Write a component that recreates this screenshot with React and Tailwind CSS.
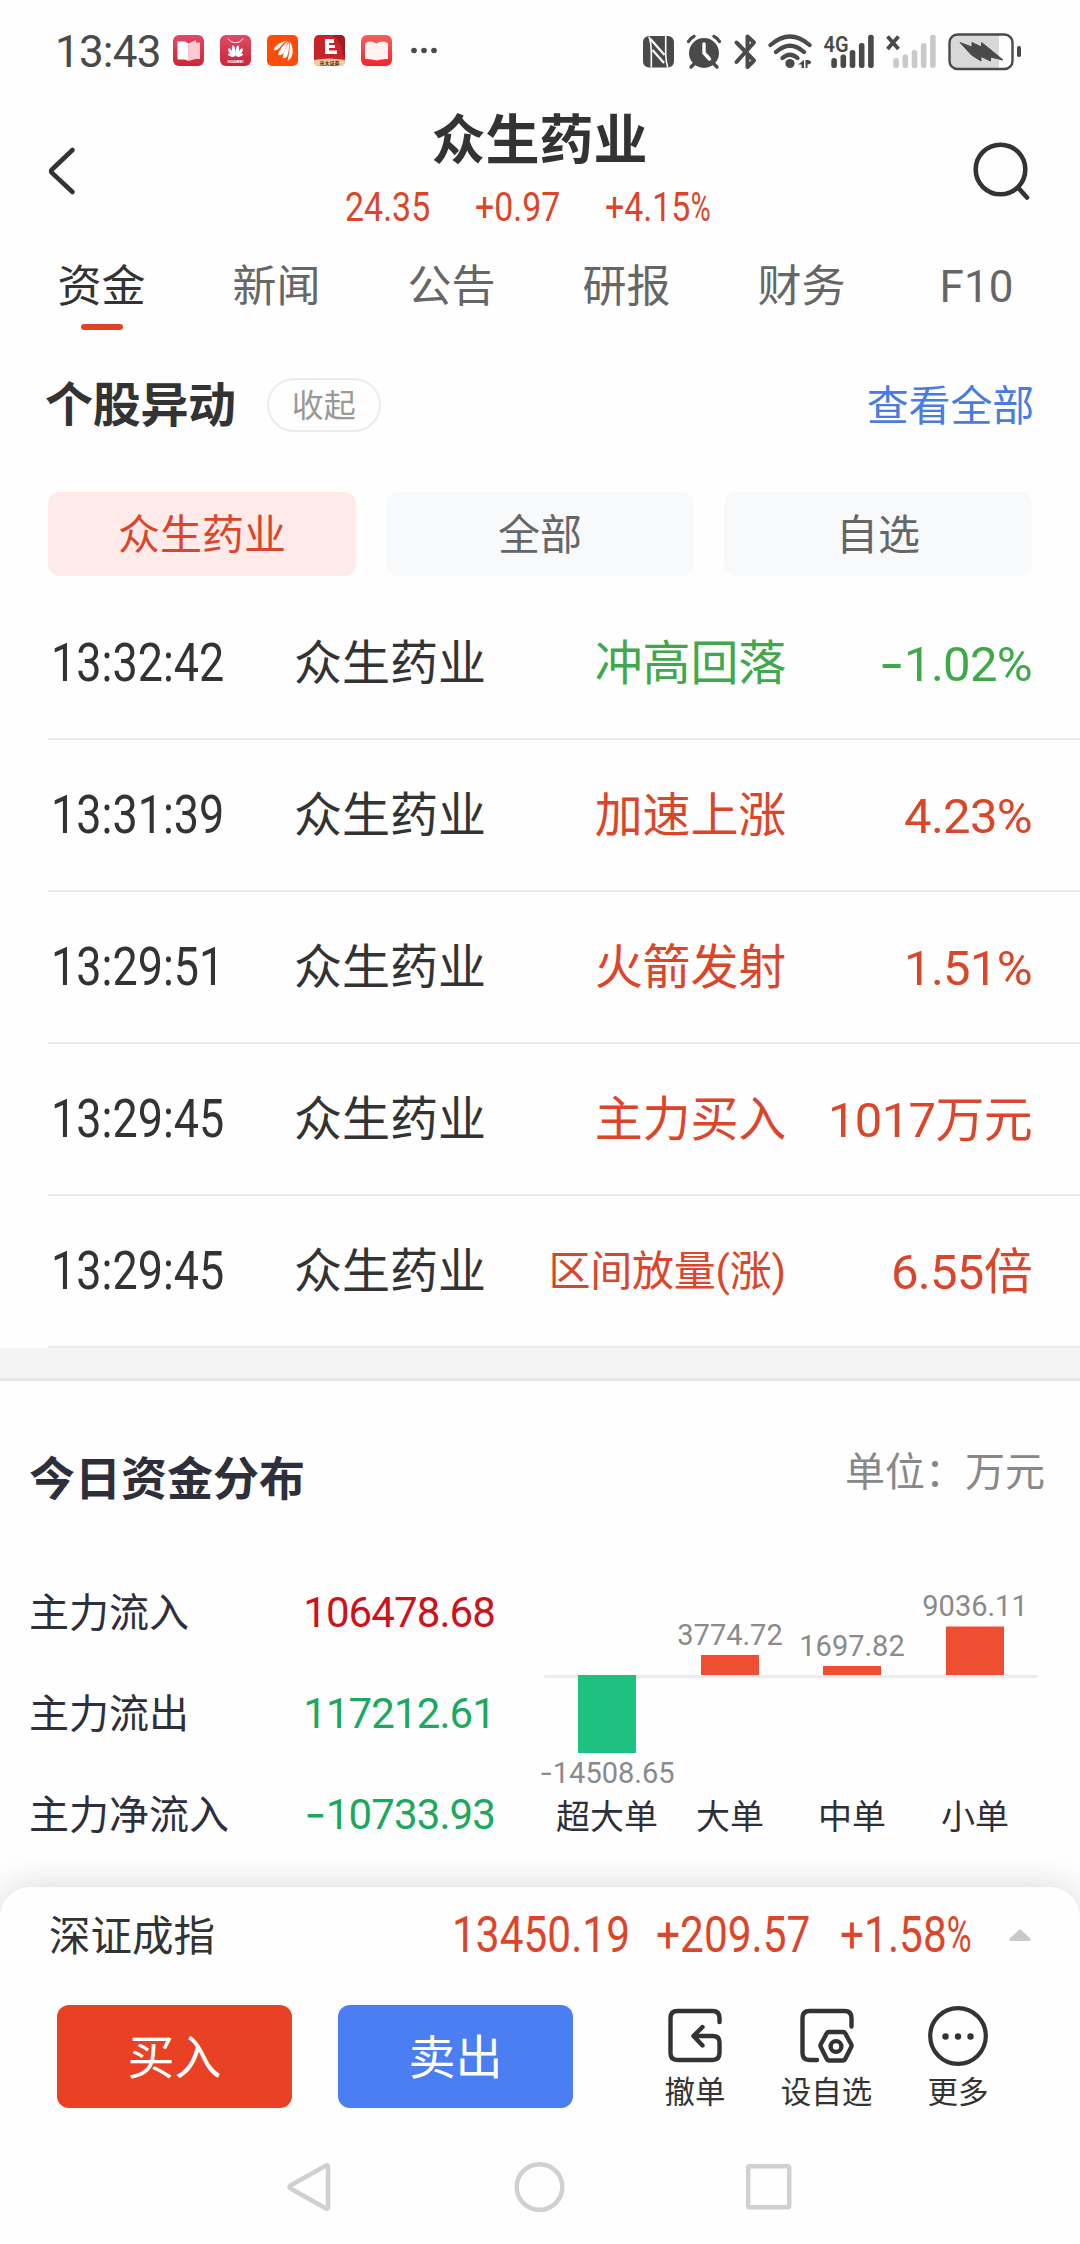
import React from "react";

const tabs = ["资金", "新闻", "公告", "研报", "财务", "F10"];

const moves = [
  { time: "13:32:42", type: "冲高回落", value: "-1.02%", color: "text-[#3fa84a]", size: "text-[48px]" },
  { time: "13:31:39", type: "加速上涨", value: "4.23%", color: "text-[#db462b]", size: "text-[48px]" },
  { time: "13:29:51", type: "火箭发射", value: "1.51%", color: "text-[#db462b]", size: "text-[48px]" },
  { time: "13:29:45", type: "主力买入", value: "1017万元", color: "text-[#db462b]", size: "text-[48px]" },
  { time: "13:29:45", type: "区间放量(涨)", value: "6.55倍", color: "text-[#db462b]", size: "text-[42px]" },
];

const flows = [
  { label: "主力流入", value: "106478.68", color: "text-[#cc121b]" },
  { label: "主力流出", value: "117212.61", color: "text-[#1ca95f]" },
  { label: "主力净流入", value: "-10733.93", color: "text-[#1ca95f]" },
];

// x and y are measured inside the 530x303 chart
const bars = [
  { label: "超大单", value: "-14508.65", x: 48, y: 113, h: 78, fill: "#1ec17f", textY: 221 },
  { label: "大单", value: "3774.72", x: 171, y: 93, h: 20, fill: "#f04e33", textY: 83 },
  { label: "中单", value: "1697.82", x: 293, y: 104, h: 9, fill: "#f04e33", textY: 94 },
  { label: "小单", value: "9036.11", x: 416, y: 64.5, h: 48.5, fill: "#f04e33", textY: 54 },
];

// Narrow figures used for quotes and times
const Din = ({ children, percent = false }) => (
  <span className="inline-block origin-left scale-x-[0.848] whitespace-nowrap [font-weight:450]">
    {children}
    {percent && <span className="inline-block origin-left scale-x-[0.8]">%</span>}
  </span>
);

// Inter has the wider minus
const Amount = ({ value }) =>
  value.startsWith("-") ? (
    <>
      <span className="inline-block origin-right scale-x-[1.15] font-[Inter]">-</span>
      {value.slice(1)}
    </>
  ) : (
    value
  );

const AppIcons = () => (
  <svg width="266" height="31" viewBox="0 0 266 31" className="ml-[14px]">
    <defs>
      <linearGradient id="rose" x1="0" y1="0" x2="0" y2="1">
        <stop offset="0" stopColor="#df4a68" />
        <stop offset="1" stopColor="#cb2636" />
      </linearGradient>
      <linearGradient id="coral" x1="0" y1="0" x2="0" y2="1">
        <stop offset="0" stopColor="#f4605c" />
        <stop offset="1" stopColor="#fb2229" />
      </linearGradient>
    </defs>
    {/* Reader */}
    <rect width="31" height="31" rx="6" fill="url(#rose)" />
    <path d="M15.500 8.500 23 5v2.500h4V24h-4.500l-7 2z" fill="#ffc9d0" />
    <path d="M4.500 6.500H12l3.500 2V26L12 24.500H4.500z" fill="#fff" />
    {/* Store */}
    <g transform="translate(47)">
      <rect width="31" height="31" rx="6" fill="url(#rose)" />
      <path d="M8 3.500c3 5.500 12 5.500 15 0" fill="none" stroke="#fff" strokeWidth="1" />
      <g fill="#fff">
        <ellipse cx="13.700" cy="16" rx="1.700" ry="5.500" transform="rotate(-8 13.700 16)" />
        <ellipse cx="17.300" cy="16" rx="1.700" ry="5.500" transform="rotate(8 17.300 16)" />
        <ellipse cx="11" cy="17.500" rx="1.500" ry="4.800" transform="rotate(-32 11 17.500)" />
        <ellipse cx="20" cy="17.500" rx="1.500" ry="4.800" transform="rotate(32 20 17.500)" />
        <ellipse cx="10.600" cy="20.300" rx="1.100" ry="3.200" transform="rotate(-65 10.600 20.300)" />
        <ellipse cx="20.400" cy="20.300" rx="1.100" ry="3.200" transform="rotate(65 20.400 20.300)" />
      </g>
      <text x="15.500" y="28" textAnchor="middle" fontSize="4.300" fontWeight="700" fill="#fff">HUAWEI</text>
    </g>
    {/* Swoosh */}
    <g transform="translate(94)">
      <rect width="31" height="31" rx="5" fill="#ff4b08" />
      <g fill="#fff">
        <path d="M6.500 15Q9 8 20.500 5.500q-3 1.500-6 5-2.500 3.500-5 4.500-1.500.500-3 0z" />
        <path d="M11 19.500Q13.500 11.500 21.500 6q-2 4-3.500 8.500-1.500 4.500-4 5.500-2 .500-3-.500z" />
        <path d="M15.500 22.500Q17 14.500 22.500 6.500q-.500 5-.800 9-.700 6-3.200 7.500-2 .500-3-.500z" />
        <path d="M20.500 26q2.500-9 2.500-19.500 3.200 6 2.500 12-.800 5-5 7.500z" />
      </g>
    </g>
    {/* Broker */}
    <g transform="translate(141)">
      <rect width="31" height="31" rx="5" fill="#c8232a" />
      <path d="M19 0q9 8 11 22l1 1V5q0-5-5-5z" fill="#9f1a1d" />
      <path d="M0 25q15.500-3 31 0v1q0 5-5 5H5q-5 0-5-5z" fill="#f2cf9d" />
      <path d="M11 4h9v4h-5v2h6v3h-6v2.500h8V19H11z" fill="#fff" />
      <text x="15.500" y="29.500" textAnchor="middle" fontSize="5" fontWeight="700" fill="#3b1a10">光大证券</text>
    </g>
    {/* Books */}
    <g transform="translate(188)">
      <rect width="31" height="31" rx="6" fill="url(#coral)" />
      <path d="M6 7q5-1.500 9.500 1.500Q20 5.500 25 7q.500 1 2 1.500V24q-6-.500-11.500 1.500Q10 23.500 4 24V8.500Q5.500 8 6 7z" fill="#fff2f0" />
    </g>
    <g fill="#4a4a4a">
      <circle cx="241" cy="15.500" r="2.800" />
      <circle cx="251" cy="15.500" r="2.800" />
      <circle cx="261" cy="15.500" r="2.800" />
    </g>
  </svg>
);

// NFC, alarm, bluetooth, wifi, two signal meters and the battery
const StatusIcons = () => (
  <svg width="382" height="40" viewBox="642 30 382 40" fill="#4a4a4a">
    <rect x="643" y="35" width="31" height="31.500" rx="6" />
    <g fill="none" stroke="#fff">
      <path d="M651.300 66.500V50q0-8-2.300-14.500" strokeWidth="1.600" />
      <path d="M650 37.500 664.500 54M652.500 49 664 62" strokeWidth="2.200" />
      <path d="M665.700 35V52q0 8 2 14.500" strokeWidth="1.600" />
    </g>

    <circle cx="704" cy="52" r="15" />
    <g stroke="#4a4a4a" strokeWidth="3.400" strokeLinecap="round" fill="none">
      <path d="M688.500 40.500q2-3.500 5.500-5M719.500 40.500q-2-3.500-5.500-5M695 62l-4 4M713 62l4 4" />
    </g>
    <path d="M704 43v9l5.500 6" fill="none" stroke="#fff" strokeWidth="3.400" strokeLinecap="round" />

    <path d="M736.500 41.500 754 59.500l-6.500 6.500V54M736.500 61 754 41.500l-6.500-6V49" fill="none" stroke="#4a4a4a" strokeWidth="4" strokeLinecap="round" strokeLinejoin="round" />

    <g stroke="#4a4a4a" strokeWidth="4.200" strokeLinecap="round" fill="none">
      <path d="M770.500 44q19.500-17 39 0M776 51q14-12.500 28 0M782.500 57q7.500-6.500 15 0" />
    </g>
    <circle cx="790" cy="62.500" r="4.600" />
    <path d="M804 59v8h-2.500v-3.500H798zM805.500 59v8h2v-3.500q3 0 4-2.500l-3-2z" />

    <text x="823.500" y="50.500" fontSize="22.500" fontWeight="600" textLength="25" lengthAdjust="spacingAndGlyphs">4G</text>
    <g>
      <rect x="831.300" y="57" width="5.600" height="10" rx="2.500" />
      <rect x="840.500" y="53.500" width="5.600" height="13.500" rx="2.500" />
      <rect x="849.700" y="49" width="5.600" height="18" rx="2.500" />
      <rect x="858.900" y="42" width="5.600" height="25" rx="2.500" />
      <rect x="868.100" y="33.700" width="5.600" height="33.300" rx="2.500" />
    </g>
    <path d="M887.500 35.500l11 12.500m0-12.500l-11 12.500" stroke="#4a4a4a" strokeWidth="3.800" />
    <g fill="#c9c9c9">
      <rect x="893.300" y="57" width="5.600" height="10" rx="2.500" />
      <rect x="902.500" y="53.500" width="5.600" height="13.500" rx="2.500" />
      <rect x="911.700" y="49" width="5.600" height="18" rx="2.500" />
      <rect x="920.900" y="42" width="5.600" height="25" rx="2.500" />
      <rect x="930.100" y="33.700" width="5.600" height="33.300" rx="2.500" />
    </g>

    <path d="M957 34h42v33h-42q-7 0-7-7V41q0-7 7-7z" fill="#d8d8d8" />
    <rect x="949.500" y="33.500" width="63" height="34.500" rx="8" fill="none" stroke="#4a4a4a" strokeWidth="2.400" />
    <rect x="1017" y="45" width="4" height="11" rx="1.800" />
    <path d="M960 41.500 972 46v-4.500l9.500 4.500v-4.500l7 5.500 14.500 12-12.500-3v4l-9.500-4.500v4.500l-9.500-6z" stroke="#4a4a4a" strokeWidth="1" strokeLinejoin="round" />
  </svg>
);

const App = () => {
  return (
    <div className="flex h-[2244px] w-[1080px] flex-col overflow-hidden bg-[#fefefe] leading-none text-[#333] [font-family:Roboto,'Noto_Sans_CJK_SC',sans-serif]">
      {/* Status bar */}
      <div className="flex h-[101px] shrink-0 items-center justify-between pl-[55px] pr-[56px]">
        <div className="flex items-center">
          <span className="w-[104px] whitespace-nowrap pt-[2px] text-[44px] tracking-[-0.8px] text-[#4a4a4a]">13:43</span>
          <AppIcons />
        </div>
        <StatusIcons />
      </div>

      {/* Header */}
      <div className="flex h-[140px] shrink-0 items-center">
        <div className="w-[343px] pl-[46px]">
          <svg width="32" height="52" viewBox="0 0 32 52" fill="none" stroke="#333" strokeWidth="4.600" strokeLinecap="round" strokeLinejoin="round">
            <path d="M26.500 5 6 24.500q-1.800 1.700 0 3.400L26.500 47" />
          </svg>
        </div>
        <div className="w-[390px] self-start">
          <h1 className="flex h-[76px] items-center justify-center pl-[3px] pt-[5px] text-[54px] font-bold">众生药业</h1>
          <div className="flex h-[62px] items-center text-[40px] text-[#db462b]">
            <div className="w-[130px] pl-[2px]"><Din>24.35</Din></div>
            <div className="w-[130px] pl-[2px]"><Din>+0.97</Din></div>
            <div className="w-[130px] pl-[2px]"><Din percent>+4.15</Din></div>
          </div>
        </div>
        <div className="flex flex-1 justify-end pr-[47px]">
          <svg width="62" height="62" viewBox="0 0 62 62" fill="none" stroke="#333" strokeWidth="4.600" strokeLinecap="round">
            <circle cx="29.500" cy="29.500" r="24.800" />
            <path d="M47 47.500 56 57.500" />
          </svg>
        </div>
      </div>

      {/* Tabs */}
      <div className="grid h-[89px] shrink-0 grid-cols-6 pl-[14px] pr-4">
        {tabs.map((tab, i) => (
          <div key={tab} className="flex flex-col items-center">
            <span className={"flex h-[83px] items-center pt-[9px] text-[44px] " + (i === 0 ? "text-[#333]" : "text-[#666]")}>{tab}</span>
            {i === 0 && <span className="h-[6px] w-[42px] rounded-full bg-[#e04326]" />}
          </div>
        ))}
      </div>

      {/* Stock moves */}
      <section className="shrink-0">
        <div className="flex h-[150px] items-center pl-[45px] pr-[46px]">
          <h2 className="pt-[2px] text-[48px] font-bold tracking-[-0.3px]">个股异动</h2>
          <span className="ml-[31px] flex h-[54px] w-[114px] items-center justify-center rounded-full border-2 border-[#ebebeb] pt-[2px] text-[32px] text-[#999]">收起</span>
          <span className="ml-auto pt-[3px] text-[42px] tracking-[-0.2px] text-[#4a7cdf]">查看全部</span>
        </div>
        <div className="mb-3 mt-3 grid grid-cols-3 gap-[30px] px-12 text-[42px]">
          <span className="flex h-[84px] items-center justify-center rounded-xl bg-[#feebe9] pt-[3px] text-[#db462b]">众生药业</span>
          <span className="flex h-[84px] items-center justify-center rounded-xl bg-[#f7f9fb] pt-[3px] text-[#666]">全部</span>
          <span className="flex h-[84px] items-center justify-center rounded-xl bg-[#f7f9fb] pt-[3px] text-[#666]">自选</span>
        </div>
        {moves.map((m, i) => (
          <div key={i} className="ml-12 flex h-[152px] items-center border-b-2 border-[#ebebeb] pr-12 pt-[2px]">
            <div className="w-[246px] pb-[3px] pl-[3px] text-[53px] leading-[50px]"><Din>{m.time}</Din></div>
            <span className="text-[48px]">众生药业</span>
            <span className={"flex-1 text-right tracking-[-0.2px] " + m.color + " " + m.size}>{m.type}</span>
            <span className={"w-[246px] text-right text-[49px] tracking-[-0.7px] " + m.color}><Amount value={m.value} /></span>
          </div>
        ))}
      </section>

      <div className="h-[33px] shrink-0 border-b-[3px] border-[#e6e6e6] bg-[#f4f4f4]" />

      {/* Today's fund distribution */}
      <section className="h-[506px] shrink-0 text-[#2f2f3b]">
        <div className="flex h-[181px] items-center justify-between pl-[29px] pr-[35px]">
          <h2 className="pt-[14px] text-[46px] font-bold">今日资金分布</h2>
          <span className="pt-[2px] text-[40px] text-[#888]">单位：万元</span>
        </div>
        <div className="flex">
          <div className="w-[530px] pl-[29px] pr-[35px]">
            {flows.map((f) => (
              <div key={f.label} className="flex h-[101px] items-center justify-between">
                <span className="pt-[2px] text-[40px]">{f.label}</span>
                <span className={"text-[42px] tracking-[-0.9px] " + f.color}><Amount value={f.value} /></span>
              </div>
            ))}
          </div>
          <svg width="530" height="303" viewBox="0 0 530 303" textAnchor="middle">
            <rect x="14" y="113" width="494" height="3" rx="1.500" fill="#ececec" />
            {bars.map((b) => (
              <g key={b.label}>
                <rect x={b.x} y={b.y} width="58" height={b.h} fill={b.fill} />
                <text x={b.x + 29} y={b.textY} fontSize="29" fill="#8a8a8a">
                  {b.value.startsWith("-") && <tspan fontFamily="Inter">-</tspan>}
                  {b.value.replace("-", "")}
                </text>
                <text x={b.x + 29} y="267" fontSize="34" fill="#2f2f3b">{b.label}</text>
              </g>
            ))}
          </svg>
        </div>
      </section>

      {/* Trade sheet */}
      <div className="flex h-[357px] shrink-0 flex-col rounded-t-[30px] bg-[#fefefe] shadow-[0_0_36px_rgba(0,0,0,0.16)]">
        <div className="flex h-24 items-center pl-[49px] text-[50px] text-[#db462b]">
          <span className="w-[403px] pt-[3px] text-[41.5px] text-[#333]">深证成指</span>
          <div className="w-[204px]"><Din>13450.19</Din></div>
          <div className="w-[184px]"><Din>+209.57</Din></div>
          <div className="w-[169px]"><Din percent>+1.58</Din></div>
          <svg width="22" height="12" viewBox="0 0 22 12" fill="#c9c9c9">
            <path d="M10 .700q1-1 2 0L21.300 9.500q1.200 2-1 2.500H1.700q-2.200-.500-1-2.500z" />
          </svg>
        </div>
        <div className="mt-[22px] flex h-[103px] pl-[57px]">
          <button className="h-[103px] w-[235px] rounded-xl bg-[#e84124] pt-[2px] text-[47px] text-white">买入</button>
          <button className="ml-[46px] h-[103px] w-[235px] rounded-xl bg-[#4b7df3] pt-[2px] text-[47px] text-white">卖出</button>
          <div className="ml-[56px] flex text-[30.5px]">
            <div className="flex w-[132px] flex-col items-center">
              <svg className="shrink-0" width="62" height="62" viewBox="0 0 62 62" fill="none" stroke="#333" strokeWidth="4.400" strokeLinecap="round" strokeLinejoin="round">
                <path d="M55.500 17v-4q0-7-7-7h-35q-7 0-7 7v35q0 7 7 7h35q7 0 7-7V37q0-6-7-6H30" />
                <path d="M38.500 22 29.500 31l9 9.500" />
              </svg>
              <span className="flex h-[50px] shrink-0 items-center pt-[2px]">撤单</span>
            </div>
            <div className="flex w-[131px] flex-col items-center">
              <svg className="shrink-0" width="62" height="62" viewBox="0 0 62 62" fill="none" stroke="#333" strokeWidth="4.400" strokeLinecap="round" strokeLinejoin="round">
                <path d="M55.500 21.500V13q0-7-7-7h-35q-7 0-7 7v35q0 7 7 7H21" />
                <path d="M33 27h14q1.500 0 2.200 1.300l6 11q.700 1.400 0 2.800l-6 12Q48.500 55.500 47 55.500H33q-1.500 0-2.200-1.400l-6-12q-.700-1.400 0-2.800l6-11Q31.500 27 33 27z" />
                <circle cx="40" cy="41.500" r="5.400" />
              </svg>
              <span className="flex h-[50px] shrink-0 items-center pt-[2px]">设自选</span>
            </div>
            <div className="flex w-[132px] flex-col items-center">
              <svg className="shrink-0" width="62" height="62" viewBox="0 0 62 62" fill="none" stroke="#333" strokeWidth="4.200">
                <circle cx="31" cy="31" r="27.800" />
                <g fill="#333" stroke="none">
                  <circle cx="18.500" cy="31.500" r="3.200" />
                  <circle cx="31" cy="31.500" r="3.200" />
                  <circle cx="43.500" cy="31.500" r="3.200" />
                </g>
              </svg>
              <span className="flex h-[50px] shrink-0 items-center pt-[2px]">更多</span>
            </div>
          </div>
        </div>

        {/* System navigation */}
        <div className="flex flex-1 items-center justify-between pl-[286px] pr-[287px] pt-[22px]">
          <svg width="46" height="52" viewBox="0 0 46 52" fill="none" stroke="#d0d0d0" strokeWidth="4.500" strokeLinejoin="round">
            <path d="M40 4.500q2-1 2 1.500v40q0 2.500-2 1.500L4.500 27.500q-2-1.500 0-3z" />
          </svg>
          <svg width="52" height="52" viewBox="0 0 52 52" fill="none" stroke="#d0d0d0" strokeWidth="4.500">
            <circle cx="26.500" cy="26" r="22.800" />
          </svg>
          <svg width="48" height="48" viewBox="0 0 48 48" fill="none" stroke="#d0d0d0" strokeWidth="4.500">
            <rect x="3.200" y="3.200" width="41" height="41" rx="1.500" />
          </svg>
        </div>
      </div>
    </div>
  );
};

export default App;
